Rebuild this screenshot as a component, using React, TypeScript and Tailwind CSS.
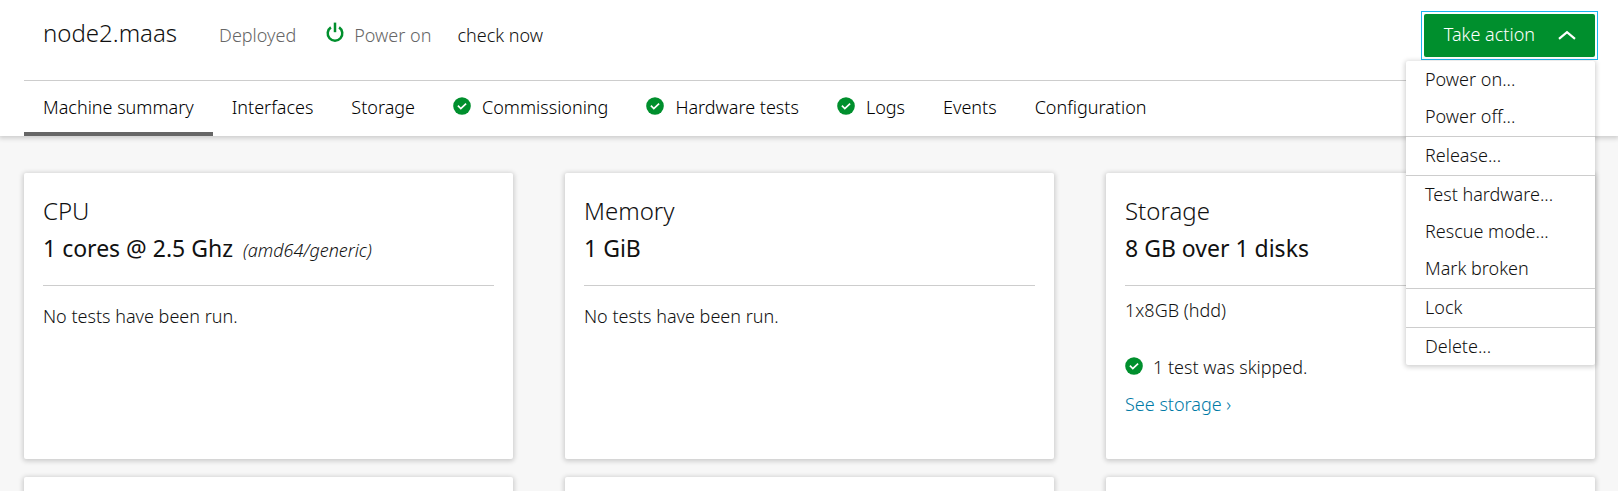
import { useState, type ReactNode } from 'react';

const tabs = [
  { label: 'Machine summary' },
  { label: 'Interfaces' },
  { label: 'Storage' },
  { label: 'Commissioning', passed: true },
  { label: 'Hardware tests', passed: true },
  { label: 'Logs', passed: true },
  { label: 'Events' },
  { label: 'Configuration' },
];

const actionGroups = [
  ['Power on...', 'Power off...'],
  ['Release...'],
  ['Test hardware...', 'Rescue mode...', 'Mark broken'],
  ['Lock'],
  ['Delete...'],
];

function SuccessIcon() {
  return (
    <svg viewBox="0 0 18 18" className="mb-1 size-[18px] shrink-0" aria-hidden="true">
      <circle cx="9" cy="9" r="8.8" fill="#008f2d" />
      <path d="M4.9 8.7l2.9 2.9 5.3-5" fill="none" stroke="#fff" strokeWidth="1.7" />
    </svg>
  );
}

function PowerIcon() {
  return (
    <svg viewBox="0 0 18 20" className="mb-px h-5 w-[18px] shrink-0" aria-hidden="true">
      <g fill="none" stroke="#008f2d" strokeWidth="2.5">
        <path d="M9 0.6v9.6" />
        <path d="M4.9 5.4A7.3 7.3 0 1 0 13.1 5.4" />
      </g>
    </svg>
  );
}

function ChevronUp() {
  return (
    <svg viewBox="0 0 18 10" className="h-[10px] w-[18px] shrink-0" aria-hidden="true">
      <path d="M1 8.8l8-6.6 8 6.6" fill="none" stroke="#fff" strokeWidth="2.2" />
    </svg>
  );
}

const shadow = 'shadow-[0_1px_5px_1px_rgba(17,17,17,0.2)]';

function Card({ title, value, note, children }: { title: string; value: string; note?: string; children: ReactNode }) {
  return (
    <section className={`min-h-[286px] rounded-xs bg-white px-[19px] pt-[19px] ${shadow}`}>
      <h2 className="text-[24px] leading-[38px]">{title}</h2>
      <p className="border-b border-[#cdcdcd] pb-[18px] text-[23px] leading-[37px] font-normal">
        {value}
        {note && <em className="ml-[10px] text-[18px] leading-none font-light">{note}</em>}
      </p>
      {children}
    </section>
  );
}

export default function App() {
  const [active, setActive] = useState('Machine summary');
  const [open, setOpen] = useState(true);

  return (
    <div className="h-screen overflow-hidden bg-[#f7f7f7] font-['Noto_Sans',sans-serif] text-[18px] leading-[37px] font-light text-[#111]">
      <header className={`relative bg-white pr-[23px] pl-6 ${shadow}`}>
        <div className="flex items-start justify-between border-b border-[#cdcdcd] pt-[14px] pb-[23px] pl-[19px]">
          <div className="flex items-baseline">
            <h1 className="text-[24px]">node2.maas</h1>
            <span className="ml-[42px] text-[#666]">Deployed</span>
            <span className="ml-[30px] flex items-baseline gap-[10px] text-[#666]">
              <PowerIcon />
              Power on
            </span>
            <button type="button" className="ml-[26px]">check now</button>
          </div>

          <div className="relative">
            <div className="outline outline-offset-2 outline-[#19b6ee]">
              <button
                type="button"
                aria-expanded={open}
                onClick={() => setOpen(!open)}
                className="flex h-[43px] items-center gap-[23px] rounded-xs bg-[#008f2d] pr-[19px] pb-0.5 pl-5 text-white"
              >
                Take action
                <ChevronUp />
              </button>
            </div>
            {open && (
              <div className={`absolute top-full right-0 mt-1 w-[189px] divide-y divide-[#cdcdcd] rounded-xs bg-white ${shadow}`}>
                {actionGroups.map((group) => (
                  <div key={group[0]} className="flex flex-col pb-px last:pb-0">
                    {group.map((action) => (
                      <button key={action} type="button" className="px-[19px] text-left hover:bg-[#f7f7f7]">
                        {action}
                      </button>
                    ))}
                  </div>
                ))}
              </div>
            )}
          </div>
        </div>

        <nav className="flex">
          {tabs.map((tab) => (
            <button
              key={tab.label}
              type="button"
              onClick={() => setActive(tab.label)}
              className={`flex h-[55px] items-center gap-[11px] border-b-4 px-[19px] pt-0.5 text-black ${active === tab.label ? 'border-[#666]' : 'border-transparent'}`}
            >
              {tab.passed && <SuccessIcon />}
              {tab.label}
            </button>
          ))}
        </nav>
      </header>

      <main className="grid grid-cols-3 gap-x-[52px] gap-y-[18px] pt-[37px] pr-[23px] pl-6">
        <Card title="CPU" value="1 cores @ 2.5 Ghz" note="(amd64/generic)">
          <p className="mt-3">No tests have been run.</p>
        </Card>
        <Card title="Memory" value="1 GiB">
          <p className="mt-3">No tests have been run.</p>
        </Card>
        <Card title="Storage" value="8 GB over 1 disks">
          <p className="mt-[6px]">1x8GB (hdd)</p>
          <p className="mt-5 flex items-center gap-[10px]">
            <SuccessIcon />
            1 test was skipped.
          </p>
          <a href="#storage" className="text-[#007aa6]">See storage ›</a>
        </Card>
        {[0, 1, 2].map((i) => (
          <section key={i} className={`min-h-[286px] rounded-xs bg-white ${shadow}`} />
        ))}
      </main>
    </div>
  );
}
